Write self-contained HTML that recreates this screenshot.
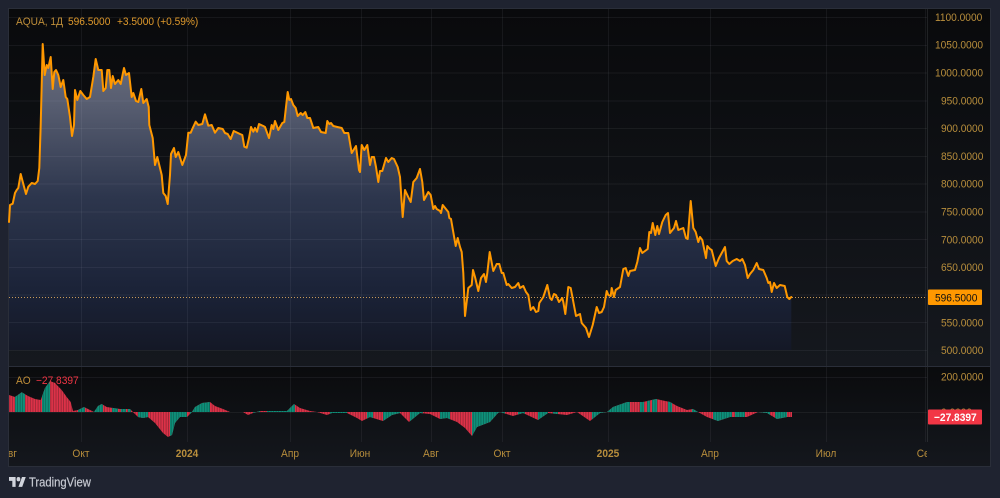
<!DOCTYPE html>
<html><head><meta charset="utf-8"><style>
html,body{margin:0;padding:0;width:1000px;height:498px;overflow:hidden;background:#1f2330}
svg{display:block;font-family:"Liberation Sans",sans-serif}
text{font-size:11px;transform-box:fill-box;transform-origin:0 50%;transform:scaleX(.925)}
.a text{fill:#b88e3c}
.p text{text-anchor:start}
.t text{text-anchor:middle;transform-origin:50% 50%}
</style></head><body>
<svg width="1000" height="498" viewBox="0 0 1000 498" xmlns="http://www.w3.org/2000/svg">
<defs>
<linearGradient id="bg1" x1="0" y1="0" x2="0" y2="1"><stop offset="0" stop-color="#090a0c"/><stop offset="1" stop-color="#15181e"/></linearGradient>
<linearGradient id="bg2" x1="0" y1="0" x2="0" y2="1"><stop offset="0" stop-color="#0a0b0d"/><stop offset="1" stop-color="#14171d"/></linearGradient>
<linearGradient id="fill" gradientUnits="userSpaceOnUse" x1="0" y1="44" x2="0" y2="350">
<stop offset="0" stop-color="#6d707e"/><stop offset=".2" stop-color="#575d70"/><stop offset=".5" stop-color="#2d364d"/><stop offset=".8" stop-color="#1b2338"/><stop offset="1" stop-color="#141826"/></linearGradient>
<clipPath id="ch"><rect x="9" y="9" width="918" height="457"/></clipPath>
<clipPath id="ao"><path d="M9 412V395L15 397 21.7 392.3 28 396 35 399 40.7 400 45 388 50 381 55 383 61.7 390 66.7 397 70.7 402 73 411 78 410 84 407 90 410 94 412 98 406 101.7 404 106.7 407 113 408 120 409 130 409 133 412 138 417 143 418 148 417 155 423 163 433 168 437 172 435 175 423 180 417 187 417 192 412 195 407 202 403 210 402 215 406 223 409 230 412 243 412 248 415 253 413 260 411 277 411 287 411 294 404 300 408 310 411 317 412 327 415 332 413 347 413 357 418 362 421 370 417 383 421 392 415 400 413 409 422 420 413 430 414 440 419 447 418 457 422 465 428 472 436 477 427 490 422 498 413 500 412 513 416 523 413 538 420 548 413 567 415 577 412 590 421 600 413 607 412 613 407 627 402 643 402 656 399 670 402 677 406 687 410 693 409 698 412 707 417 718 421 730 417 747 417 758 412 767 413 777 419 787 417 792 417V412Z"/></clipPath>
<pattern id="bars" patternUnits="userSpaceOnUse" width="2.56" height="10"><rect x="1.9" width=".66" height="10" fill="#0c0e11" fill-opacity=".4"/></pattern>
</defs>
<rect width="1000" height="498" fill="#1f2330"/>
<rect x="8.5" y="8.5" width="982" height="458" fill="#14171d" stroke="#2a2e39"/>
<rect x="9" y="9" width="981" height="357" fill="url(#bg1)"/>
<rect x="9" y="367" width="981" height="99" fill="url(#bg2)"/>
<polygon fill="url(#fill)" points="9,350 9,222 10,205 12.7,203.7 15,193 16.7,190 18.3,188 20.7,174 23.3,184 26,194 28.3,186.7 31.7,183 35,184 37.7,181 39.3,168 40.7,125 42.7,44 44.7,75 46.7,65 48.3,68 50.7,57 52.7,89 54.3,72 56,70 58.3,75 60.7,87 63.3,80 65.7,97 67.3,99 70,117 72,136 74,125 75,90 77.3,100 80.3,91 83.3,95 86.7,99 90,97 93.3,77 95.7,59 98.3,70 101.7,70 103.3,91 105.7,88 107.3,70 109.3,70 111,88 112.7,76 115,84 118.3,80 120.7,84 124,68 126,75 129,73 131.7,97 133.3,93 136,101 138.3,102 141.3,89 143.3,103 146.7,99 148.7,107 149.3,125 152.7,138 155,165 157.3,157 161.7,175 163.3,193 165.7,196 167.7,204 170,175 171,154 174,148 175.7,157 178.3,152 182.3,165 186,155 188.3,132.7 190.7,132.7 192.3,129 195.7,121.7 198.3,125 202.3,124 205,114.3 208.3,125.7 211.7,125 215,132.7 218.3,128 222.7,129 225,133 227.7,134 230.7,139 233.7,131 240,134 242.3,135 244.3,146.7 246.7,147.7 249,138 251,127 253.3,131.7 255,128 257,131.7 259,124 263.3,126 265,127 269,138 271.7,125 273.3,129 275,121 278.3,130 282.3,123 284.3,122 287.7,92 289.3,100 291,99 293.3,105 295.7,108 297.7,116 300.7,113 302.7,115 305.3,112 307.3,118 310,118 313.3,128 318.3,127 321,132 325.7,133 327.3,121 329.3,124 331,123 333.3,126 337.3,127 341.7,128 344.3,133 348.3,133 351.7,153 356,146 359,170 360,172 361.7,145 364.3,150 367.3,145 370,165 371.7,157 374,157 376,167 378.3,182 380,171 382.3,171 386,158 388.3,162 391.7,158 394,159 397.7,167 400,177 401.7,203 402.7,217 405,190 407.3,195 410.7,202 413.3,182 416.7,178 420,169 422.3,182 424,200 428.3,192 430.7,195 433.3,209 435,206 436.7,209 440,211 441,213 442.7,205 448.3,212 449.3,218 451,219 455.7,246 457.7,238 460,247 461.7,252 463.3,273 465,316 468.3,288 471.7,285 473,270 475,277 478.3,291 481,278 484,274 486,282 487.3,273 489.7,252 493.3,271 496.7,264 499.3,264 501.7,273 503.3,273 506.7,285 508.3,284 511.7,288 515,287 518.3,283 520,288 523.3,286 526,292 528.3,295 530.7,310 533.3,307 536,312 538.3,311 539.3,303 543.3,297 547.3,285 550,298 551.7,300 554,294 556,295 559,302 562.3,298 563.3,302 565.3,314 568.3,287 570.7,288 576,316 580,314 581.7,323 586,328 589,337 592.7,325 596.7,307 599,313 601.7,312 604,307 606.7,291 608.3,295 610.7,296 611.7,288 614,297 615.7,290 620,287 623.3,269 625.7,268 628.3,276 630,271 635,270 637.3,262 640,248 642.3,253 645,251 647.7,249 649.3,232 651,233 652.7,223 655.3,235 657.3,226 659,234 662.3,222 665.7,215 668,213 670,233 674,228 676,221 678.3,230 683.3,228 686,238 687.7,239 690.7,201 693.3,228 695.7,232 698.3,242 700,237 702.3,240 706,258 707.3,246 710,249 711.7,250 715.7,266 719,258 725,247 726.7,261 729.3,264 732.7,261 736.7,259 740,261 742.3,259 745,265 747.7,278 750,274 753.3,270 756.7,263 759,269 763.3,270 766.7,278 768.3,283 770,282 771.7,292 774,283 776.7,288 780,285 784.7,286 787.3,297 789.3,299 791.3,297 791.3,350"/>
<g stroke="#f0f3fa" stroke-opacity=".06" fill="none">
<path d="M81.5 9V442M187.5 9V442M290.5 9V442M361.5 9V442M431.5 9V442M502.5 9V442M608.5 9V442M710.5 9V442M826.5 9V442M925.5 9V442"/>
<path d="M9 17.5H927M9 45.5H927M9 73H927M9 101H927M9 128.5H927M9 156.5H927M9 184H927M9 212H927M9 239.5H927M9 267.5H927M9 295H927M9 322.5H927M9 350.5H927M9 377.5H927M9 412.5H927"/>
</g>
<path d="M927.5 9V442" stroke="#f0f3fa" stroke-opacity=".1"/>
<path d="M9 366.5H990" stroke="#2a2e39"/>
<path d="M9 297.5H927" stroke="#c89a5a" stroke-width="1" stroke-dasharray="1 2"/>
<g clip-path="url(#ao)">
<rect x="9" y="375" width="784" height="70" fill="#dc3248"/>
<g fill="#0e907a">
<rect x="15" y="375" width="10" height="70"/><rect x="42" y="375" width="8" height="70"/><rect x="78" y="375" width="7" height="70"/><rect x="93" y="375" width="10" height="70"/><rect x="112" y="375" width="6" height="70"/><rect x="121" y="375" width="5" height="70"/><rect x="128" y="375" width="3" height="70"/><rect x="138" y="375" width="10" height="70"/><rect x="170" y="375" width="17" height="70"/><rect x="190" y="375" width="20" height="70"/><rect x="230" y="375" width="13" height="70"/><rect x="253" y="375" width="7" height="70"/><rect x="267" y="375" width="28" height="70"/><rect x="330" y="375" width="17" height="70"/><rect x="367" y="375" width="6" height="70"/><rect x="383" y="375" width="17" height="70"/><rect x="410" y="375" width="13" height="70"/><rect x="440" y="375" width="10" height="70"/><rect x="472" y="375" width="33" height="70"/><rect x="518" y="375" width="7" height="70"/><rect x="538" y="375" width="10" height="70"/><rect x="553" y="375" width="5" height="70"/><rect x="592" y="375" width="38" height="70"/><rect x="640" y="375" width="4" height="70"/><rect x="647" y="375" width="3" height="70"/><rect x="652" y="375" width="5" height="70"/><rect x="668" y="375" width="4" height="70"/><rect x="692" y="375" width="6" height="70"/><rect x="713" y="375" width="19" height="70"/><rect x="735" y="375" width="10" height="70"/><rect x="757" y="375" width="13" height="70"/><rect x="775" y="375" width="12" height="70"/>
</g>
<rect x="9" y="375" width="784" height="70" fill="url(#bars)"/>
</g>
<polyline fill="none" stroke="#ff9800" stroke-width="2" stroke-linejoin="round" stroke-linecap="round" points="9,222 10,205 12.7,203.7 15,193 16.7,190 18.3,188 20.7,174 23.3,184 26,194 28.3,186.7 31.7,183 35,184 37.7,181 39.3,168 40.7,125 42.7,44 44.7,75 46.7,65 48.3,68 50.7,57 52.7,89 54.3,72 56,70 58.3,75 60.7,87 63.3,80 65.7,97 67.3,99 70,117 72,136 74,125 75,90 77.3,100 80.3,91 83.3,95 86.7,99 90,97 93.3,77 95.7,59 98.3,70 101.7,70 103.3,91 105.7,88 107.3,70 109.3,70 111,88 112.7,76 115,84 118.3,80 120.7,84 124,68 126,75 129,73 131.7,97 133.3,93 136,101 138.3,102 141.3,89 143.3,103 146.7,99 148.7,107 149.3,125 152.7,138 155,165 157.3,157 161.7,175 163.3,193 165.7,196 167.7,204 170,175 171,154 174,148 175.7,157 178.3,152 182.3,165 186,155 188.3,132.7 190.7,132.7 192.3,129 195.7,121.7 198.3,125 202.3,124 205,114.3 208.3,125.7 211.7,125 215,132.7 218.3,128 222.7,129 225,133 227.7,134 230.7,139 233.7,131 240,134 242.3,135 244.3,146.7 246.7,147.7 249,138 251,127 253.3,131.7 255,128 257,131.7 259,124 263.3,126 265,127 269,138 271.7,125 273.3,129 275,121 278.3,130 282.3,123 284.3,122 287.7,92 289.3,100 291,99 293.3,105 295.7,108 297.7,116 300.7,113 302.7,115 305.3,112 307.3,118 310,118 313.3,128 318.3,127 321,132 325.7,133 327.3,121 329.3,124 331,123 333.3,126 337.3,127 341.7,128 344.3,133 348.3,133 351.7,153 356,146 359,170 360,172 361.7,145 364.3,150 367.3,145 370,165 371.7,157 374,157 376,167 378.3,182 380,171 382.3,171 386,158 388.3,162 391.7,158 394,159 397.7,167 400,177 401.7,203 402.7,217 405,190 407.3,195 410.7,202 413.3,182 416.7,178 420,169 422.3,182 424,200 428.3,192 430.7,195 433.3,209 435,206 436.7,209 440,211 441,213 442.7,205 448.3,212 449.3,218 451,219 455.7,246 457.7,238 460,247 461.7,252 463.3,273 465,316 468.3,288 471.7,285 473,270 475,277 478.3,291 481,278 484,274 486,282 487.3,273 489.7,252 493.3,271 496.7,264 499.3,264 501.7,273 503.3,273 506.7,285 508.3,284 511.7,288 515,287 518.3,283 520,288 523.3,286 526,292 528.3,295 530.7,310 533.3,307 536,312 538.3,311 539.3,303 543.3,297 547.3,285 550,298 551.7,300 554,294 556,295 559,302 562.3,298 563.3,302 565.3,314 568.3,287 570.7,288 576,316 580,314 581.7,323 586,328 589,337 592.7,325 596.7,307 599,313 601.7,312 604,307 606.7,291 608.3,295 610.7,296 611.7,288 614,297 615.7,290 620,287 623.3,269 625.7,268 628.3,276 630,271 635,270 637.3,262 640,248 642.3,253 645,251 647.7,249 649.3,232 651,233 652.7,223 655.3,235 657.3,226 659,234 662.3,222 665.7,215 668,213 670,233 674,228 676,221 678.3,230 683.3,228 686,238 687.7,239 690.7,201 693.3,228 695.7,232 698.3,242 700,237 702.3,240 706,258 707.3,246 710,249 711.7,250 715.7,266 719,258 725,247 726.7,261 729.3,264 732.7,261 736.7,259 740,261 742.3,259 745,265 747.7,278 750,274 753.3,270 756.7,263 759,269 763.3,270 766.7,278 768.3,283 770,282 771.7,292 774,283 776.7,288 780,285 784.7,286 787.3,297 789.3,299 791.3,297"/>
<g class="a p">
<text x="935" y="21">1100.0000</text><text x="935" y="48.5">1050.0000</text><text x="935" y="76.5">1000.0000</text><text x="941" y="104.5">950.0000</text><text x="941" y="132">900.0000</text><text x="941" y="160">850.0000</text><text x="941" y="187.5">800.0000</text><text x="941" y="215.5">750.0000</text><text x="941" y="243.5">700.0000</text><text x="941" y="271">650.0000</text><text x="941" y="326.5">550.0000</text><text x="941" y="354">500.0000</text><text x="941" y="380.5">200.0000</text><text x="941" y="416">0.0000</text>
</g>
<g class="a t" clip-path="url(#ch)">
<text x="9" y="457">Авг</text><text x="81" y="457">Окт</text><text x="187" y="457" font-weight="bold">2024</text><text x="290" y="457">Апр</text><text x="360" y="457">Июн</text><text x="431" y="457">Авг</text><text x="502" y="457">Окт</text><text x="608" y="457" font-weight="bold">2025</text><text x="710" y="457">Апр</text><text x="826" y="457">Июл</text><text x="926" y="457">Сен</text>
</g>
<rect x="928" y="289.5" width="54" height="15.5" rx="1" fill="#ff9800"/>
<text x="935" y="301.5" fill="#111">596.5000</text>
<rect x="928" y="409.5" width="54" height="15" rx="1" fill="#f23645"/>
<text x="934" y="421" fill="#fff" font-weight="bold">−27.8397</text>
<text x="16" y="25" fill="#c08f3a">AQUA, 1Д</text>
<text x="68" y="25" fill="#e09a2c">596.5000</text>
<text x="117" y="25" fill="#e09a2c">+3.5000 (+0.59%)</text>
<text x="16" y="384" fill="#c08f3a">AO</text>
<text x="36" y="384" fill="#f23645">−27.8397</text>
<svg x="9" y="474.8" width="17" height="15.4" viewBox="0 0 36 28" preserveAspectRatio="none"><path fill="#d1d4dc" d="M14 22H7V11H0V4h14v18zM28 22h-8l7.5-18h8L28 22z"/><circle fill="#d1d4dc" cx="20" cy="8" r="4"/></svg>
<text x="29" y="486.5" style="font-size:12.5px;transform:scaleX(.9)" fill="#c5c8d0" stroke="#c5c8d0" stroke-width=".2">TradingView</text>
</svg>
</body></html>
